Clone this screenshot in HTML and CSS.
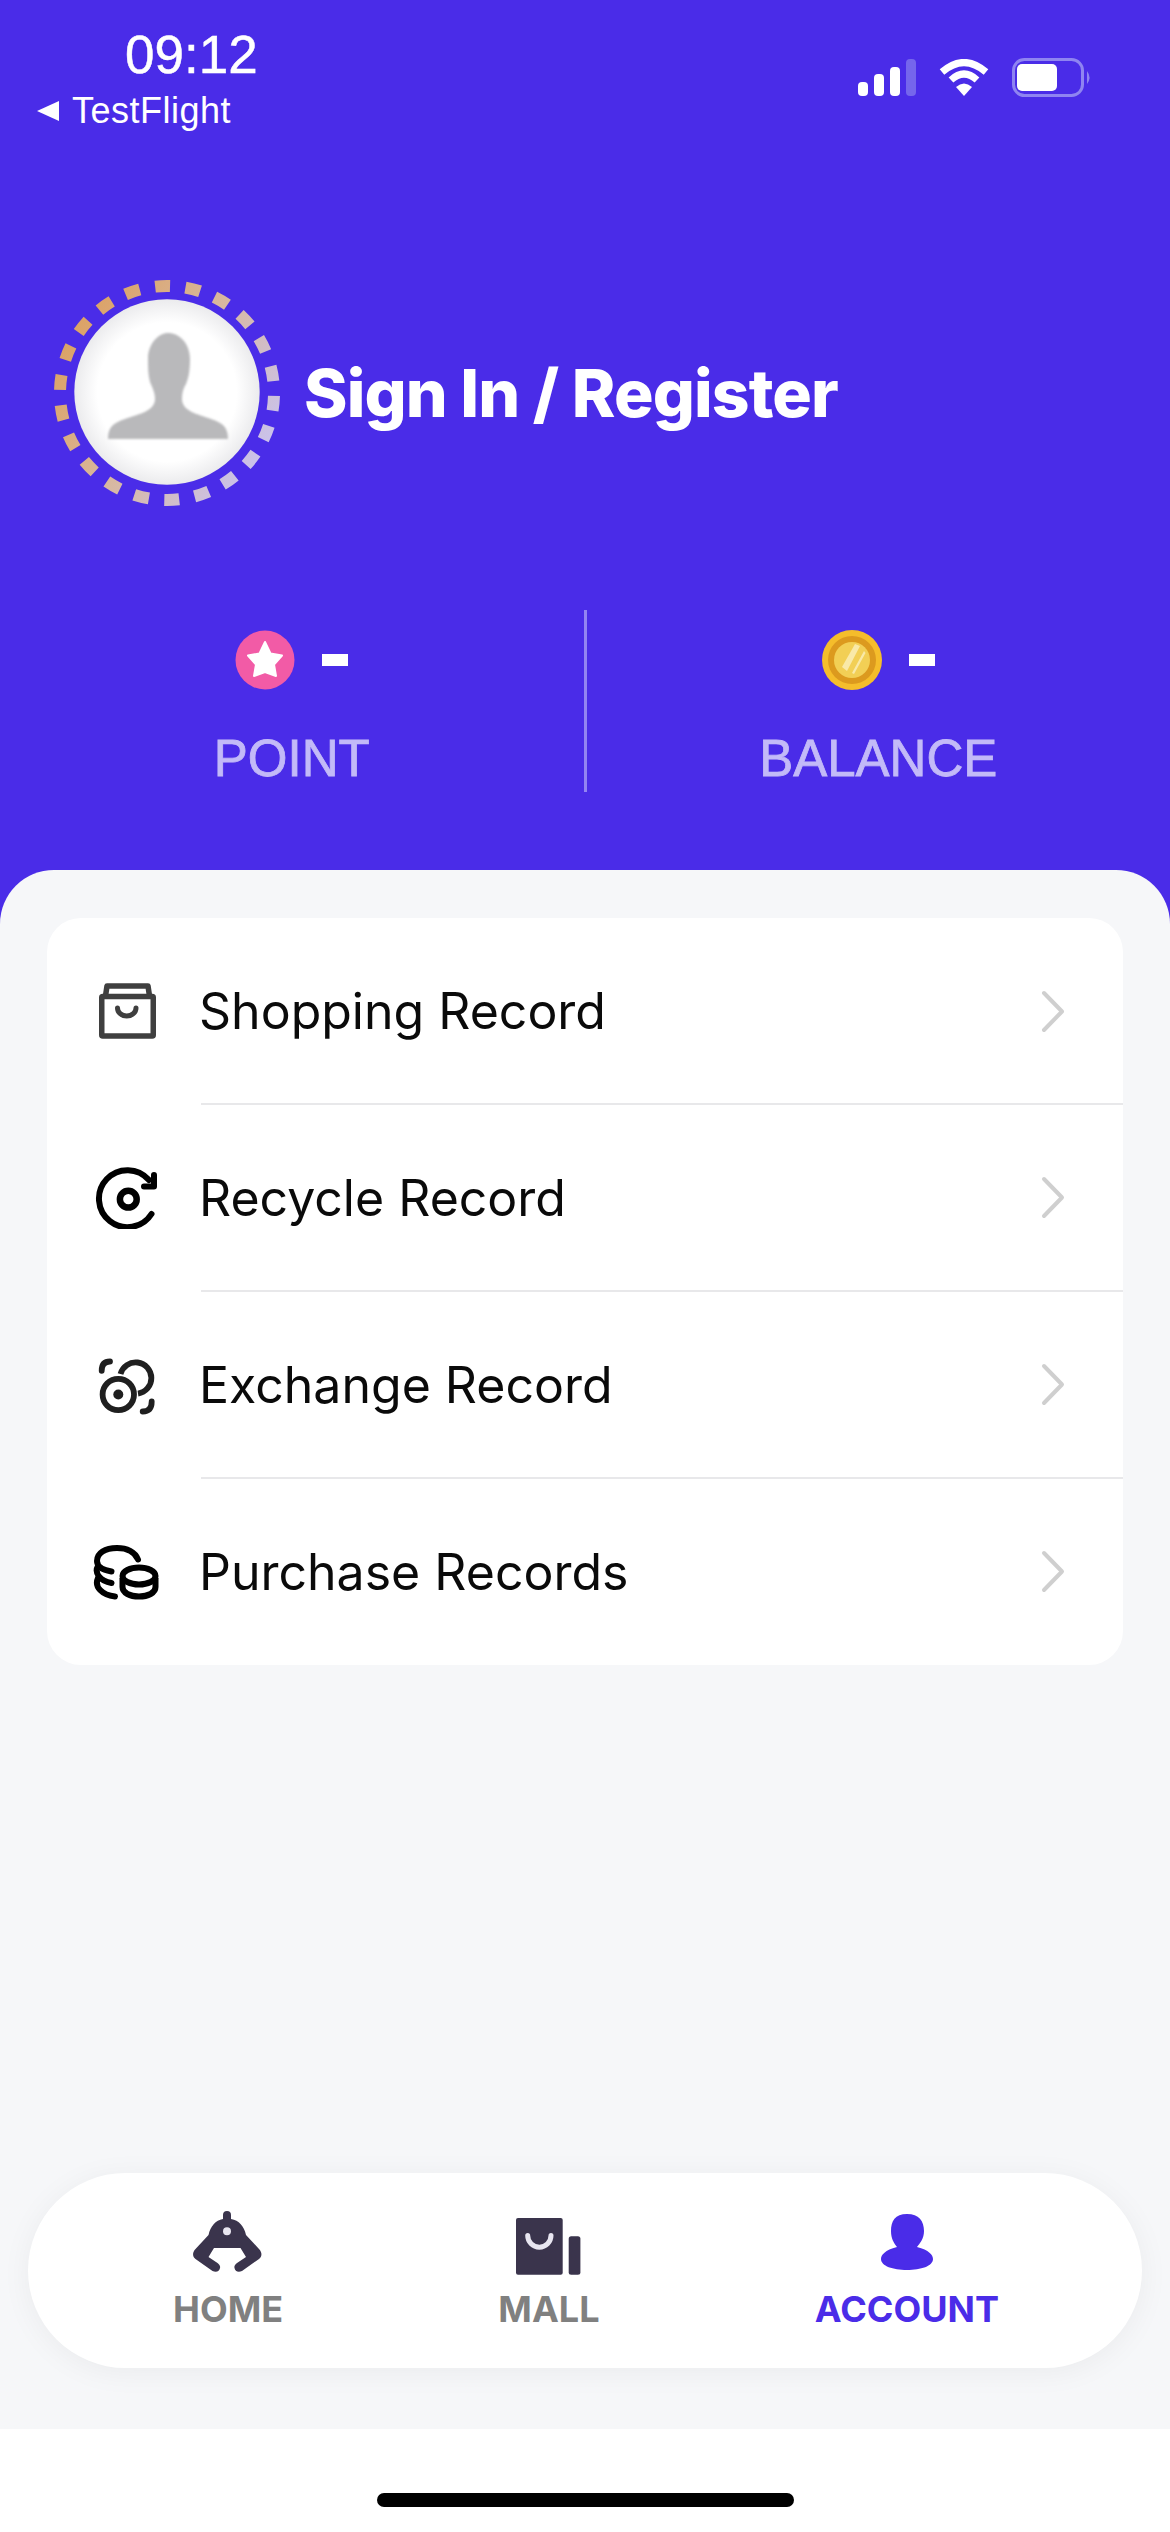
FILE: index.html
```html
<!DOCTYPE html>
<html>
<head>
<meta charset="utf-8" />
<title>Account</title>
<link rel="stylesheet" href="styles.css">
</head>
<body>

<div class="screen">
  <div class="header">
    <div class="statusBar">
      <div class="statusLeft">
        <div class="clock">09:12</div>
        <div class="backLink"><span class="backArrow"></span>TestFlight</div>
      </div>
      <div class="statusIcons">
        <svg width="58" height="37" viewBox="0 0 58 37">
          <rect x="0" y="23" width="10" height="14" rx="4" fill="#fff"/>
          <rect x="16" y="15" width="10" height="22" rx="4" fill="#fff"/>
          <rect x="32" y="8" width="10" height="29" rx="4" fill="#fff"/>
          <rect x="48" y="0" width="10" height="37" rx="4" fill="#7566ec"/>
        </svg>
        <svg width="50" height="37" viewBox="0 0 50 37">
          <path d="M3 13 Q25 -6 47 13" fill="none" stroke="#fff" stroke-width="7"/>
          <path d="M12 21 Q25 9 38 21" fill="none" stroke="#fff" stroke-width="7"/>
          <path d="M17 28 Q25 21 33 28 L25 37 Z" fill="#fff"/>
        </svg>
        <svg width="80" height="39" viewBox="0 0 80 39">
          <rect x="1.500" y="1.500" width="69" height="36" rx="11" fill="none" stroke="#8f84f1" stroke-width="3"/>
          <rect x="5" y="6" width="40" height="27" rx="5" fill="#fff"/>
          <path d="M75 13 Q80 19.500 75 26 Z" fill="#8f84f1"/>
        </svg>
      </div>
    </div>

    <div class="profile">
      <svg class="avatarRing" width="232" height="232" viewBox="0 0 232 232">
        <defs>
          <linearGradient id="ringGrad" x1="0" y1="0.2" x2="1" y2="0.8">
            <stop offset="0" stop-color="#dca060"/>
            <stop offset="0.5" stop-color="#d8b8a0"/>
            <stop offset="1" stop-color="#c9c3f3"/>
          </linearGradient>
          <radialGradient id="faceGrad">
            <stop offset="0.75" stop-color="#fff"/>
            <stop offset="1" stop-color="#ebebed"/>
          </radialGradient>
          <filter id="soft"><feGaussianBlur stdDeviation="0.8"/></filter>
        </defs>
        <circle cx="116" cy="116" r="107" fill="none" stroke="url(#ringGrad)" stroke-width="12" stroke-dasharray="15 15.560" transform="rotate(1.500 116 116)"/>
        <circle cx="116" cy="115" r="92.700" fill="url(#faceGrad)"/>
        <path filter="url(#soft)" d="M57 162 C57 150 62 146 74 142 C88 137 104 134 104 122 C104 116 102 112 99 105 C97 98 97 90 97 82 C97 66 108 56 117 56 C128 56 139 66 139 82 C139 92 138 100 135 107 C132 112 131 116 131 122 C131 134 146 137 160 142 C172 146 177 150 177 162 Z" fill="#b9b9bb"/>
      </svg>
      <div class="signIn">Sign In / Register</div>
    </div>

    <div class="stats">
      <div class="stat">
        <div class="statValue">
          <svg width="60" height="60" viewBox="0 0 60 60">
            <circle cx="30" cy="30" r="29.500" fill="#f25ba6"/>
            <path d="M30 12 L35.500 23.500 L47 25.500 L39 34.500 L41 46 L30 42 L19 46 L21 34.500 L13 25.500 L24.500 23.500 Z" fill="#fff" stroke="#fff" stroke-width="2" stroke-linejoin="round"/>
          </svg>
          <span class="dash"></span>
        </div>
        <div class="statLabel">POINT</div>
      </div>
      <div class="stat">
        <div class="statValue">
          <svg width="60" height="60" viewBox="0 0 60 60">
            <circle cx="30" cy="30" r="30" fill="#f5bd2b"/>
            <circle cx="30" cy="30" r="24" fill="#dc9a1e"/>
            <circle cx="30" cy="30" r="18" fill="#f2cf55"/>
            <path d="M20 37 L33 14 L38 16 L25 41 Z" fill="#f9e9a8"/>
            <path d="M30 43 L42 21 L43.500 23 L32 44 Z" fill="#f9e9a8"/>
          </svg>
          <span class="dash"></span>
        </div>
        <div class="statLabel">BALANCE</div>
      </div>
    </div>
  </div>

  <div class="content">
    <div class="recordCard">
      <div class="recordRow">
        <svg class="recordIcon" width="70" height="62" viewBox="0 0 70 62">
          <path d="M13.500 16 L15 6 H56 L57.500 16" fill="none" stroke="#3f3f3f" stroke-width="5.500" stroke-linejoin="round"/>
          <rect x="9.750" y="16.500" width="51.500" height="39.500" rx="1" fill="none" stroke="#3f3f3f" stroke-width="5.500" stroke-linejoin="round"/>
          <path d="M25.500 28 A9.200 8 0 0 0 44 28" fill="none" stroke="#3f3f3f" stroke-width="5" stroke-linecap="round"/>
        </svg>
        <div class="recordText">Shopping Record</div>
        <svg class="chevron" width="24" height="43" viewBox="0 0 24 43">
          <path d="M3 3 L21 21.500 L3 40" fill="none" stroke="#cfcfcf" stroke-width="4" stroke-linecap="round" stroke-linejoin="round"/>
        </svg>
      </div>
      <div class="recordRow">
        <svg class="recordIcon" width="70" height="62" viewBox="0 0 70 62">
          <path d="M59.500 47 A28.500 28.500 0 1 1 57 13" fill="none" stroke="#000" stroke-width="6" stroke-linecap="round"/>
          <circle cx="36.300" cy="32.200" r="8.400" fill="none" stroke="#000" stroke-width="6.500"/>
          <path d="M62 8 V19.500 H52" fill="none" stroke="#000" stroke-width="6" stroke-linecap="round" stroke-linejoin="round"/>
        </svg>
        <div class="recordText">Recycle Record</div>
        <svg class="chevron" width="24" height="43" viewBox="0 0 24 43">
          <path d="M3 3 L21 21.500 L3 40" fill="none" stroke="#cfcfcf" stroke-width="4" stroke-linecap="round" stroke-linejoin="round"/>
        </svg>
      </div>
      <div class="recordRow">
        <svg class="recordIcon" width="70" height="62" viewBox="0 0 70 62">
          <circle cx="26.300" cy="40.500" r="15.700" fill="none" stroke="#1f1f1f" stroke-width="5.800"/>
          <circle cx="26.300" cy="40.500" r="5" fill="#1f1f1f"/>
          <path d="M28.500 20 A15.700 15.700 0 1 1 46 39.600" fill="none" stroke="#1f1f1f" stroke-width="5.800"/>
          <path d="M9.700 16.800 Q9.700 7.500 18 7.500" fill="none" stroke="#1f1f1f" stroke-width="5.800" stroke-linecap="round"/>
          <path d="M59.700 47.500 Q59.700 57.500 50.700 57.500" fill="none" stroke="#1f1f1f" stroke-width="5.800" stroke-linecap="round"/>
        </svg>
        <div class="recordText">Exchange Record</div>
        <svg class="chevron" width="24" height="43" viewBox="0 0 24 43">
          <path d="M3 3 L21 21.500 L3 40" fill="none" stroke="#cfcfcf" stroke-width="4" stroke-linecap="round" stroke-linejoin="round"/>
        </svg>
      </div>
      <div class="recordRow">
        <svg class="recordIcon" width="70" height="62" viewBox="0 0 70 62">
          <path d="M46 18.500 C43 11 35 7 25 7 C13 7 5 12 5 20 C5 26 11 29 19.500 30.500" fill="none" stroke="#000" stroke-width="6" stroke-linecap="round"/>
          <path d="M6 25 C2 32 8 40 19.500 42" fill="none" stroke="#000" stroke-width="6" stroke-linecap="round"/>
          <path d="M6 37 C2 46 10 54 23 55.500" fill="none" stroke="#000" stroke-width="6" stroke-linecap="round"/>
          <ellipse cx="47" cy="35" rx="16.500" ry="8.500" fill="none" stroke="#000" stroke-width="6"/>
          <path d="M30.500 37 V46 C30.500 52 38 55.500 47 55.500 C56 55.500 63.500 52 63.500 46 V37" fill="none" stroke="#000" stroke-width="6"/>
        </svg>
        <div class="recordText">Purchase Records</div>
        <svg class="chevron" width="24" height="43" viewBox="0 0 24 43">
          <path d="M3 3 L21 21.500 L3 40" fill="none" stroke="#cfcfcf" stroke-width="4" stroke-linecap="round" stroke-linejoin="round"/>
        </svg>
      </div>
    </div>

    <div class="tabBar">
      <div class="tab">
        <svg width="70" height="65" viewBox="0 0 70 65">
          <path d="M30 4 a4 4 0 0 1 8 0 V8 C46 9.500 51 15 53 24 L66 38 C69.500 41.500 69 46 66 48 L49 60 C45 62 42 60 41.500 57 C41 55 42 53.500 44 52 L53 46 L47.500 37 H21 L15.500 46 L24.500 52 C26.500 53.500 27.500 55 27 57 C26.500 60 23.500 62 19.500 60 L2.500 48 C-0.500 46 -1 41.500 2.500 38 L15.500 24 C17.500 15 22.500 9.500 30 8 Z" fill="#3a344c"/>
          <circle cx="34" cy="20.300" r="4" fill="#e8e6f0"/>
        </svg>
        <div class="tabLabel">HOME</div>
      </div>
      <div class="tab">
        <svg width="65" height="65" viewBox="0 0 65 65">
          <g transform="translate(0 7)">
            <rect x="0" y="0" width="46.700" height="56.700" rx="2" fill="#3a344c"/>
            <rect x="52.700" y="18.300" width="11.700" height="38.400" rx="2.500" fill="#3a344c"/>
            <path d="M11.700 17.500 A11.650 11.650 0 0 0 35 17.500" fill="none" stroke="#e8e6f0" stroke-width="5" stroke-linecap="round"/>
          </g>
        </svg>
        <div class="tabLabel">MALL</div>
      </div>
      <div class="tab tabActive">
        <svg width="52" height="65" viewBox="0 0 52 65">
          <g transform="translate(0 3)">
            <path d="M26 0 C38 0 43 7 43 17 C43 25 39 29 36 33 C48 36 52 41 52 45 C52 52 40 56 26 56 C12 56 0 52 0 45 C0 41 4 36 16 33 C13 29 10 25 10 17 C10 7 14 0 26 0 Z" fill="#4a2ce8"/>
          </g>
        </svg>
        <div class="tabLabel">ACCOUNT</div>
      </div>
    </div>
  </div>

  <div class="homeArea">
    <div class="homeBar"></div>
  </div>
</div>

</body>
</html>
```

FILE: styles.css
```css
html, body {
  margin: 0;
  padding: 0;
  background: #fff;
  font-family: "Liberation Sans", Arial, sans-serif;
}
.screen {
  width: 1170px;
  height: 2532px;
  overflow: hidden;
  display: flex;
  flex-direction: column;
  background: #4a2ce8;
}
.header {
  height: 870px;
  flex-shrink: 0;
  box-sizing: border-box;
}

/* status bar */
.statusBar {
  display: flex;
  justify-content: space-between;
  padding: 27px 78px 0 37px;
  height: 134px;
  box-sizing: border-box;
}
.clock {
  color: #fff;
  font-size: 53px;
  line-height: 56px;
  margin-left: 88px;
  -webkit-text-stroke: 0.5px #fff;
}
.backLink {
  display: flex;
  align-items: center;
  color: #fff;
  font-size: 36px;
  letter-spacing: 0.5px;
  line-height: 40px;
  margin-top: 8px;
}
.backArrow {
  width: 0;
  height: 0;
  border-top: 10px solid transparent;
  border-bottom: 10px solid transparent;
  border-right: 22px solid #fff;
  margin-right: 13px;
}
.statusIcons {
  display: flex;
  align-items: center;
  gap: 23px;
  height: 39px;
  margin-top: 31px;
}

/* profile */
.profile {
  display: flex;
  align-items: center;
  gap: 21px;
  padding: 143px 0 0 51px;
}
.signIn {
  color: #fff;
  font-family: Inter, sans-serif;
  font-size: 66px;
  font-weight: 800;
  letter-spacing: -0.9px;
}

/* point and balance */
.stats {
  display: flex;
  margin-top: 101px;
}
.stat {
  flex: 1;
  height: 182px;
  display: flex;
  flex-direction: column;
  align-items: center;
}
.stat + .stat {
  border-left: 3px solid #9384f2;
}
.statValue {
  display: flex;
  align-items: center;
  gap: 27px;
  margin-top: 20px;
}
.dash {
  width: 26px;
  height: 12px;
  background: #fff;
}
.statLabel {
  color: #c3baf8;
  font-size: 51px;
  line-height: 58px;
  margin-top: 40px;
  -webkit-text-stroke: 0.8px #c3baf8;
}

/* white panel */
.content {
  flex: 1;
  background: #f6f7f9;
  border-radius: 54px 54px 0 0;
  padding: 48px 47px 0;
  display: flex;
  flex-direction: column;
  justify-content: space-between;
}
.recordCard {
  background: #fff;
  border-radius: 34px;
}
.recordRow {
  display: flex;
  align-items: center;
  height: 187px;
  position: relative;
}
.recordRow:first-child {
  height: 186px;
}
.recordRow + .recordRow::before {
  content: '';
  position: absolute;
  top: -1px;
  left: 154px;
  right: 0;
  height: 2px;
  background: #e8e8ea;
}
.recordIcon {
  margin-left: 45px;
  flex-shrink: 0;
}
.recordText {
  flex: 1;
  margin-left: 37px;
  font-family: Inter, sans-serif;
  font-size: 50px;
  color: #0a0a0a;
}
.chevron {
  margin-right: 58px;
}

/* tab bar */
.tabBar {
  display: flex;
  justify-content: space-between;
  align-items: flex-start;
  box-sizing: border-box;
  height: 195px;
  margin: 0 -19px 61px;
  padding: 38px 143px 0 145px;
  background: #fff;
  border-radius: 98px;
  box-shadow: 0 4px 30px rgba(0,0,0,0.05);
}
.tab {
  display: flex;
  flex-direction: column;
  align-items: center;
  gap: 10px;
}
.tabLabel {
  font-family: Inter, sans-serif;
  font-size: 36px;
  font-weight: 700;
  line-height: 46px;
  color: #808080;
}
.tabActive .tabLabel {
  color: #4a2ce8;
}

/* home indicator */
.homeArea {
  height: 103px;
  flex-shrink: 0;
  background: #fff;
  display: flex;
  justify-content: center;
}
.homeBar {
  width: 417px;
  height: 14px;
  margin-top: 64px;
  background: #000;
  border-radius: 7px;
}
```
